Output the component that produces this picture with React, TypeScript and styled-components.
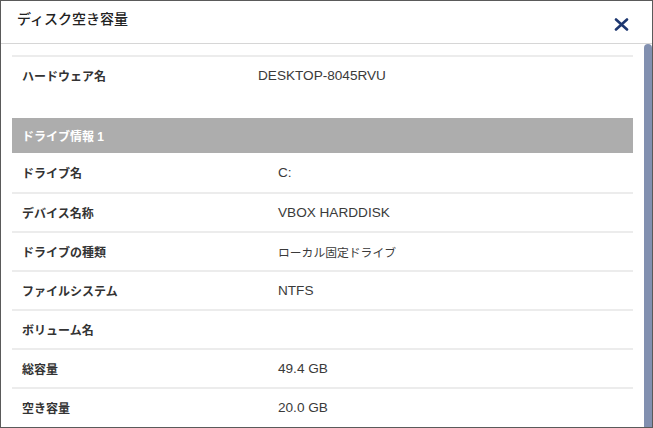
import React from "react";
import styled, { createGlobalStyle } from "styled-components";

const GlobalStyle = createGlobalStyle`
  html, body {
    margin: 0;
    padding: 0;
    background: #fff;
  }
  body {
    font-family: "Liberation Sans", "Noto Sans CJK JP", sans-serif;
  }
`;

const Window = styled.div`
  width: 653px;
  height: 428px;
  box-sizing: border-box;
  border: 1px solid #5a5a5a;
  display: flex;
  flex-direction: column;
  overflow: hidden;
  background: #fff;
`;

const Header = styled.div`
  height: 42px;
  flex-shrink: 0;
  display: flex;
  align-items: center;
  justify-content: space-between;
  padding: 0 22px 0 16px;
  border-bottom: 1px solid #d6d6d6;
`;

const Title = styled.h2`
  margin: 0;
  font-size: 14px;
  font-weight: 500;
  color: #222;
  margin-top: -8px;
`;

const CloseBtn = styled.button`
  border: none;
  background: none;
  padding: 0;
  width: 18px;
  height: 18px;
  display: flex;
  align-items: center;
  justify-content: center;
  cursor: pointer;
  margin-top: 4px;
`;

const Body = styled.div`
  flex: 1;
  display: flex;
  min-height: 0;
`;

const Content = styled.div`
  flex: 1;
  padding: 11px 11px 0 11px;
  overflow: hidden;
`;

const ScrollTrack = styled.div`
  width: 8px;
  flex-shrink: 0;
  display: flex;
`;

const ScrollThumb = styled.div`
  flex: 1;
  background: #8290b0;
  border-radius: 4px 4px 0 0;
`;

const Section = styled.div<{ $gap?: number }>`
  margin-bottom: ${({ $gap }) => $gap ?? 0}px;
`;

const Row = styled.div<{ $labelWidth: number; $top?: boolean; $bottom?: boolean }>`
  display: grid;
  grid-template-columns: ${({ $labelWidth }) => $labelWidth}px 1fr;
  align-items: center;
  height: 37px;
  border-top: ${({ $top }) => ($top ? "2px solid #ececec" : "none")};
  border-bottom: ${({ $bottom }) => ($bottom ? "2px solid #ececec" : "none")};
`;

const Label = styled.span`
  padding-left: 10px;
  font-size: 12px;
  font-weight: 700;
  color: #333;
`;

const Value = styled.span<{ $cjk?: boolean }>`
  font-size: ${({ $cjk }) => ($cjk ? "11.8px" : "13.6px")};
  color: #3a3a3a;
`;

const Band = styled.div`
  height: 35px;
  display: flex;
  align-items: center;
  padding-left: 10px;
  background: #adadad;
  color: #fff;
  font-size: 12px;
  font-weight: 700;
`;

const drive: [string, string][] = [
  ["ドライブ名", "C:"],
  ["デバイス名称", "VBOX HARDDISK"],
  ["ドライブの種類", "ローカル固定ドライブ"],
  ["ファイルシステム", "NTFS"],
  ["ボリューム名", ""],
  ["総容量", "49.4 GB"],
  ["空き容量", "20.0 GB"],
];

const isCjk = (s: string) => /[\u3000-\u9fff]/.test(s);

const App: React.FC = () => {
  return (
    <>
      <GlobalStyle />
      <Window>
        <Header>
          <Title>ディスク空き容量</Title>
          <CloseBtn type="button" aria-label="close">
            <svg width="15" height="13" viewBox="0 0 15 13">
              <path
                d="M2 1.5 L13 11.5 M13 1.5 L2 11.5"
                stroke="#1d3770"
                strokeWidth="2.6"
                strokeLinecap="round"
              />
            </svg>
          </CloseBtn>
        </Header>
        <Body>
          <Content>
            <Section $gap={24}>
              <Row $labelWidth={246} $top>
                <Label>ハードウェア名</Label>
                <Value>DESKTOP-8045RVU</Value>
              </Row>
            </Section>
            <Band>ドライブ情報 1</Band>
            <Section>
              {drive.map(([label, value], i) => (
                <Row
                  key={label}
                  $labelWidth={266}
                  $bottom={i < drive.length - 1}
                  style={i === 0 ? { height: 39 } : undefined}
                >
                  <Label>{label}</Label>
                  <Value $cjk={isCjk(value)}>{value}</Value>
                </Row>
              ))}
            </Section>
          </Content>
          <ScrollTrack>
            <ScrollThumb />
          </ScrollTrack>
        </Body>
      </Window>
    </>
  );
};

export default App;
